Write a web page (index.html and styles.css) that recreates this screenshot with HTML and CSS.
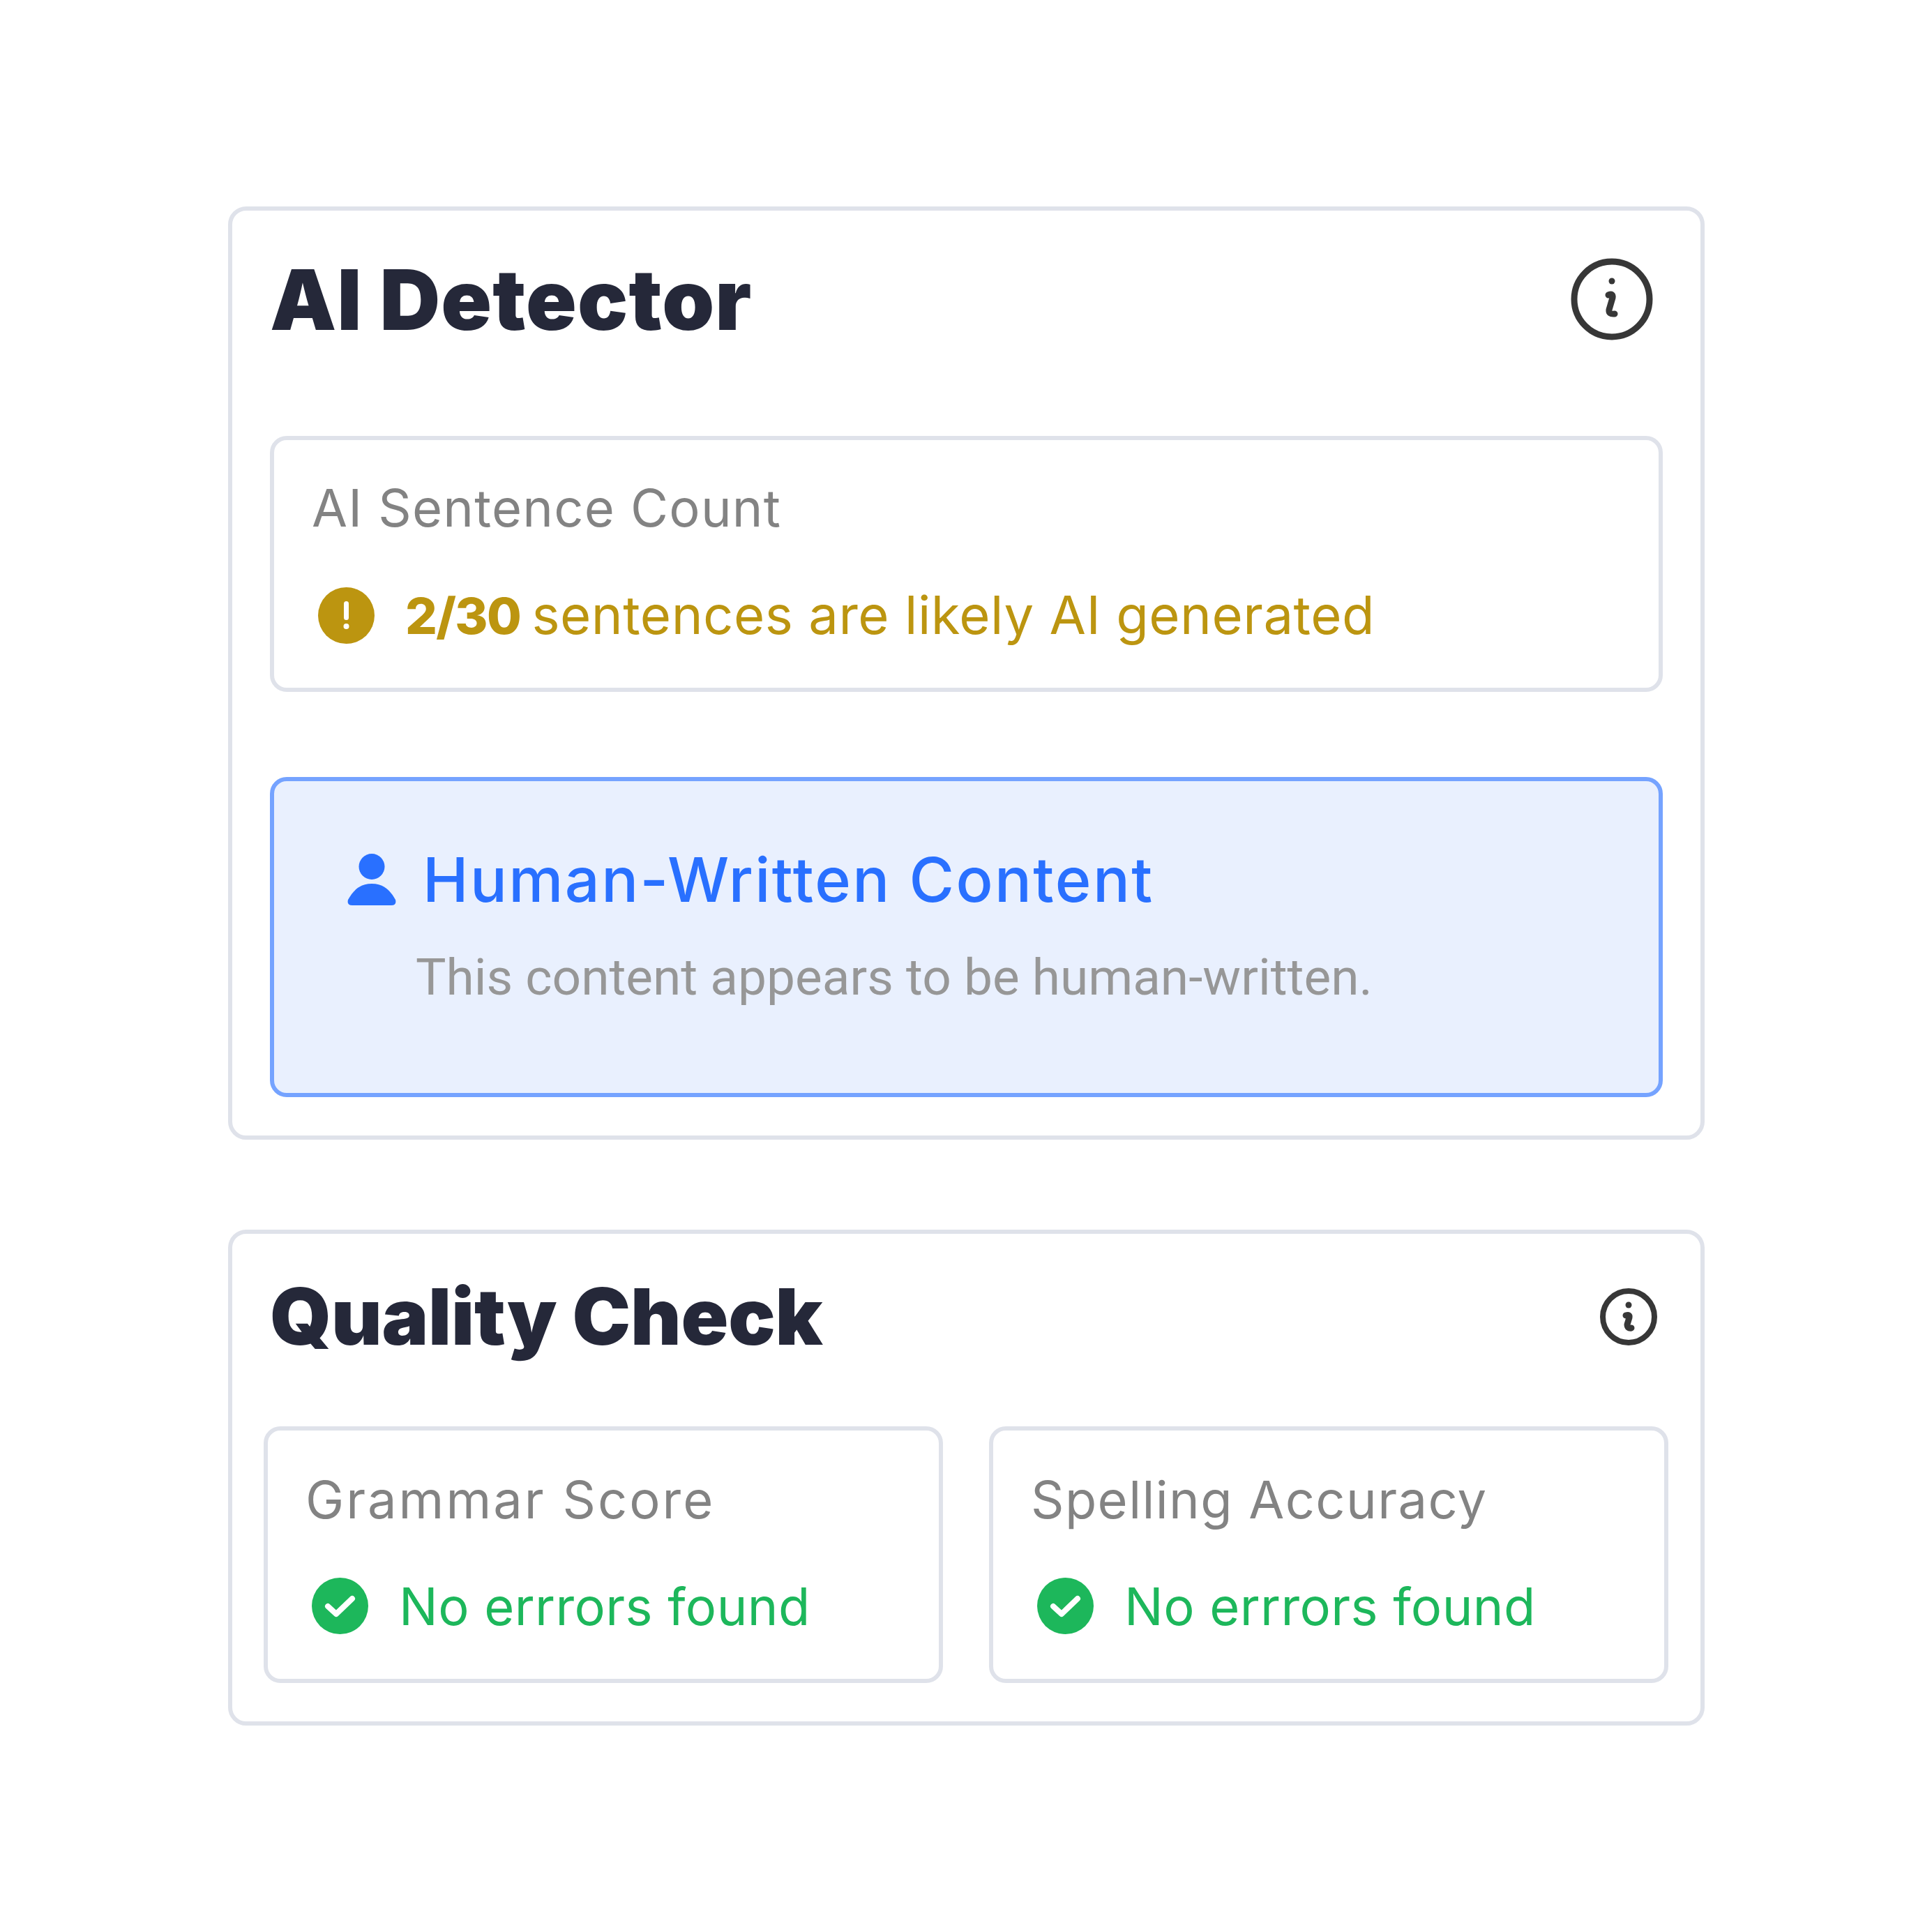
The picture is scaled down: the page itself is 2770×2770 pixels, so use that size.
FILE: index.html
```html
<!DOCTYPE html>
<html lang="en">
<head>
  <meta charset="UTF-8" />
  <title>AI Detector</title>
  <link rel="stylesheet" href="styles.css">
</head>
<body>

  <section class="panel panel-ai">
    <div class="panel-head">
      <h2 class="panel-title">AI Detector</h2>
      <svg class="info-icon" viewBox="0 0 118 118">
        <circle cx="59" cy="59" r="54" fill="none" stroke="#373737" stroke-width="9"/>
        <circle cx="59" cy="33" r="4.5" fill="#373737"/>
        <path d="M54 53 Q61 50 60 57 L55 74 Q54 81 63 80" fill="none" stroke="#373737" stroke-width="9" stroke-linecap="round" stroke-linejoin="round"/>
      </svg>
    </div>

    <div class="stat-box stat-count">
      <div class="stat-label label-count">AI Sentence Count</div>
      <div class="stat-row row-amber">
        <svg class="stat-icon" viewBox="0 0 81 81">
          <circle cx="40.5" cy="40.5" r="40.5" fill="#bc9510"/>
          <rect x="37" y="20" width="7" height="27" rx="3.5" fill="#fff"/>
          <circle cx="40.5" cy="56" r="4" fill="#fff"/>
        </svg>
        <span class="count-text"><b class="count-num">2/30</b> <span class="count-rest">sentences are likely AI generated</span></span>
      </div>
    </div>

    <div class="human-box">
      <div class="human-head">
        <svg class="person-icon" viewBox="0 0 70 74">
          <ellipse cx="35" cy="18.5" rx="18.5" ry="18.5" fill="#2970ff"/>
          <path d="M35 43 C50 43 60 50 69 66 Q71 74 63 74 L7 74 Q-1 74 1 66 C10 50 20 43 35 43 Z" fill="#2970ff"/>
        </svg>
        <span class="human-title">Human-Written Content</span>
      </div>
      <p class="human-desc">This content appears to be human-written.</p>
    </div>
  </section>

  <section class="panel panel-quality">
    <div class="quality-head">
      <h2 class="panel-title title-quality">Quality Check</h2>
      <svg class="info-icon-small" viewBox="0 0 82 82">
        <circle cx="41" cy="41" r="37" fill="none" stroke="#373737" stroke-width="8"/>
        <circle cx="41" cy="24" r="4.5" fill="#373737"/>
        <path d="M37 39 Q43 37 42 42 L39 52 Q39 58 45 57" fill="none" stroke="#373737" stroke-width="9" stroke-linecap="round" stroke-linejoin="round"/>
      </svg>
    </div>

    <div class="score-grid">
      <div class="stat-box score-box">
        <div class="stat-label label-grammar">Grammar Score</div>
        <div class="stat-row row-green">
          <svg class="stat-icon" viewBox="0 0 81 81">
            <circle cx="40.5" cy="40.5" r="40.5" fill="#1db75b"/>
            <path d="M23 41 L35 52 L58 30" fill="none" stroke="#fff" stroke-width="8" stroke-linecap="round" stroke-linejoin="round"/>
          </svg>
          <span class="ok-text">No errrors found</span>
        </div>
      </div>
      <div class="stat-box score-box">
        <div class="stat-label label-spelling">Spelling Accuracy</div>
        <div class="stat-row row-green">
          <svg class="stat-icon" viewBox="0 0 81 81">
            <circle cx="40.5" cy="40.5" r="40.5" fill="#1db75b"/>
            <path d="M23 41 L35 52 L58 30" fill="none" stroke="#fff" stroke-width="8" stroke-linecap="round" stroke-linejoin="round"/>
          </svg>
          <span class="ok-text">No errrors found</span>
        </div>
      </div>
    </div>
  </section>

</body>
</html>
```

FILE: styles.css
```css
body {
  margin: 0;
  background-color: #fff;
  font-family: 'Inter', 'Liberation Sans', sans-serif;
  padding: 296px 326px 0 327px;
  display: flex;
  flex-direction: column;
  gap: 129px;
}
.panel {
  border: 6px solid #dfe2ea;
  border-radius: 26px;
  box-sizing: border-box;
}
.panel-ai {
  height: 1338px;
  padding: 0 54px;
}
.panel-quality {
  height: 711px;
  padding: 0 45px;
}
.panel-head {
  height: 323px;
  padding: 0 14px 0 0;
  box-sizing: border-box;
  display: flex;
  justify-content: space-between;
  align-items: flex-start;
}
.panel-title {
  margin: 0;
  font-size: 120px;
  font-weight: 900;
  line-height: 140px;
  color: #252839;
  margin-top: 58px;
  letter-spacing: 1.1px;
}
.info-icon {
  width: 118px;
  height: 118px;
  margin-top: 68px;
}
.quality-head {
  height: 276px;
  padding: 0 17px 0 9px;
  display: flex;
  justify-content: space-between;
  align-items: flex-start;
  box-sizing: border-box;
}
.title-quality {
  font-size: 112px;
  line-height: 124px;
  margin-top: 56px;
  letter-spacing: -0.2px;
}
.info-icon-small {
  width: 82px;
  height: 82px;
  margin-top: 78px;
}
.stat-box {
  border: 6px solid #dfe2ea;
  border-radius: 24px;
  box-sizing: border-box;
  height: 367px;
  padding: 55px 0 0 54px;
}
.stat-label {
  font-size: 74px;
  line-height: 84px;
  font-weight: 400;
  color: #838383;
}
.label-count {
  letter-spacing: 1.2px;
}
.label-grammar {
  letter-spacing: 3px;
}
.label-spelling {
  letter-spacing: 1.4px;
}
.stat-row {
  display: flex;
  align-items: center;
  height: 81px;
  margin-top: 72px;
}
.stat-icon {
  width: 81px;
  height: 81px;
  flex: none;
  margin-left: 9px;
}
.count-text {
  font-size: 76px;
  color: #bc9510;
  margin: -3px 0 0 44px;
}
.count-num {
  font-size: 72px;
  font-weight: 800;
  letter-spacing: -1.7px;
}
.count-rest {
  margin-left: -5px;
  letter-spacing: 0.5px;
}
.human-box {
  margin-top: 122px;
  height: 459px;
  box-sizing: border-box;
  border: 6px solid #75a3ff;
  border-radius: 24px;
  background-color: #e9f0fe;
  padding: 97px 0 0 105px;
}
.human-head {
  display: flex;
  align-items: center;
  height: 84px;
}
.person-icon {
  width: 70px;
  height: 74px;
  flex: none;
  margin-top: 3px;
}
.human-title {
  font-size: 88px;
  font-weight: 500;
  color: #2970ff;
  margin: 3px 0 0 38px;
  letter-spacing: 2.4px;
}
.human-desc {
  margin: 57px 0 0 98px;
  font-family: 'Roboto', sans-serif;
  font-size: 73px;
  line-height: 86px;
  color: #979797;
}
.score-grid {
  display: grid;
  grid-template-columns: 974px 974px;
  gap: 66px;
}
.score-box {
  height: 368px;
  padding-top: 57px;
}
.score-box .stat-row {
  margin-top: 70px;
}
.ok-text {
  font-size: 74px;
  color: #1db75b;
  margin: 0 0 0 44px;
  letter-spacing: 0.4px;
}
```
